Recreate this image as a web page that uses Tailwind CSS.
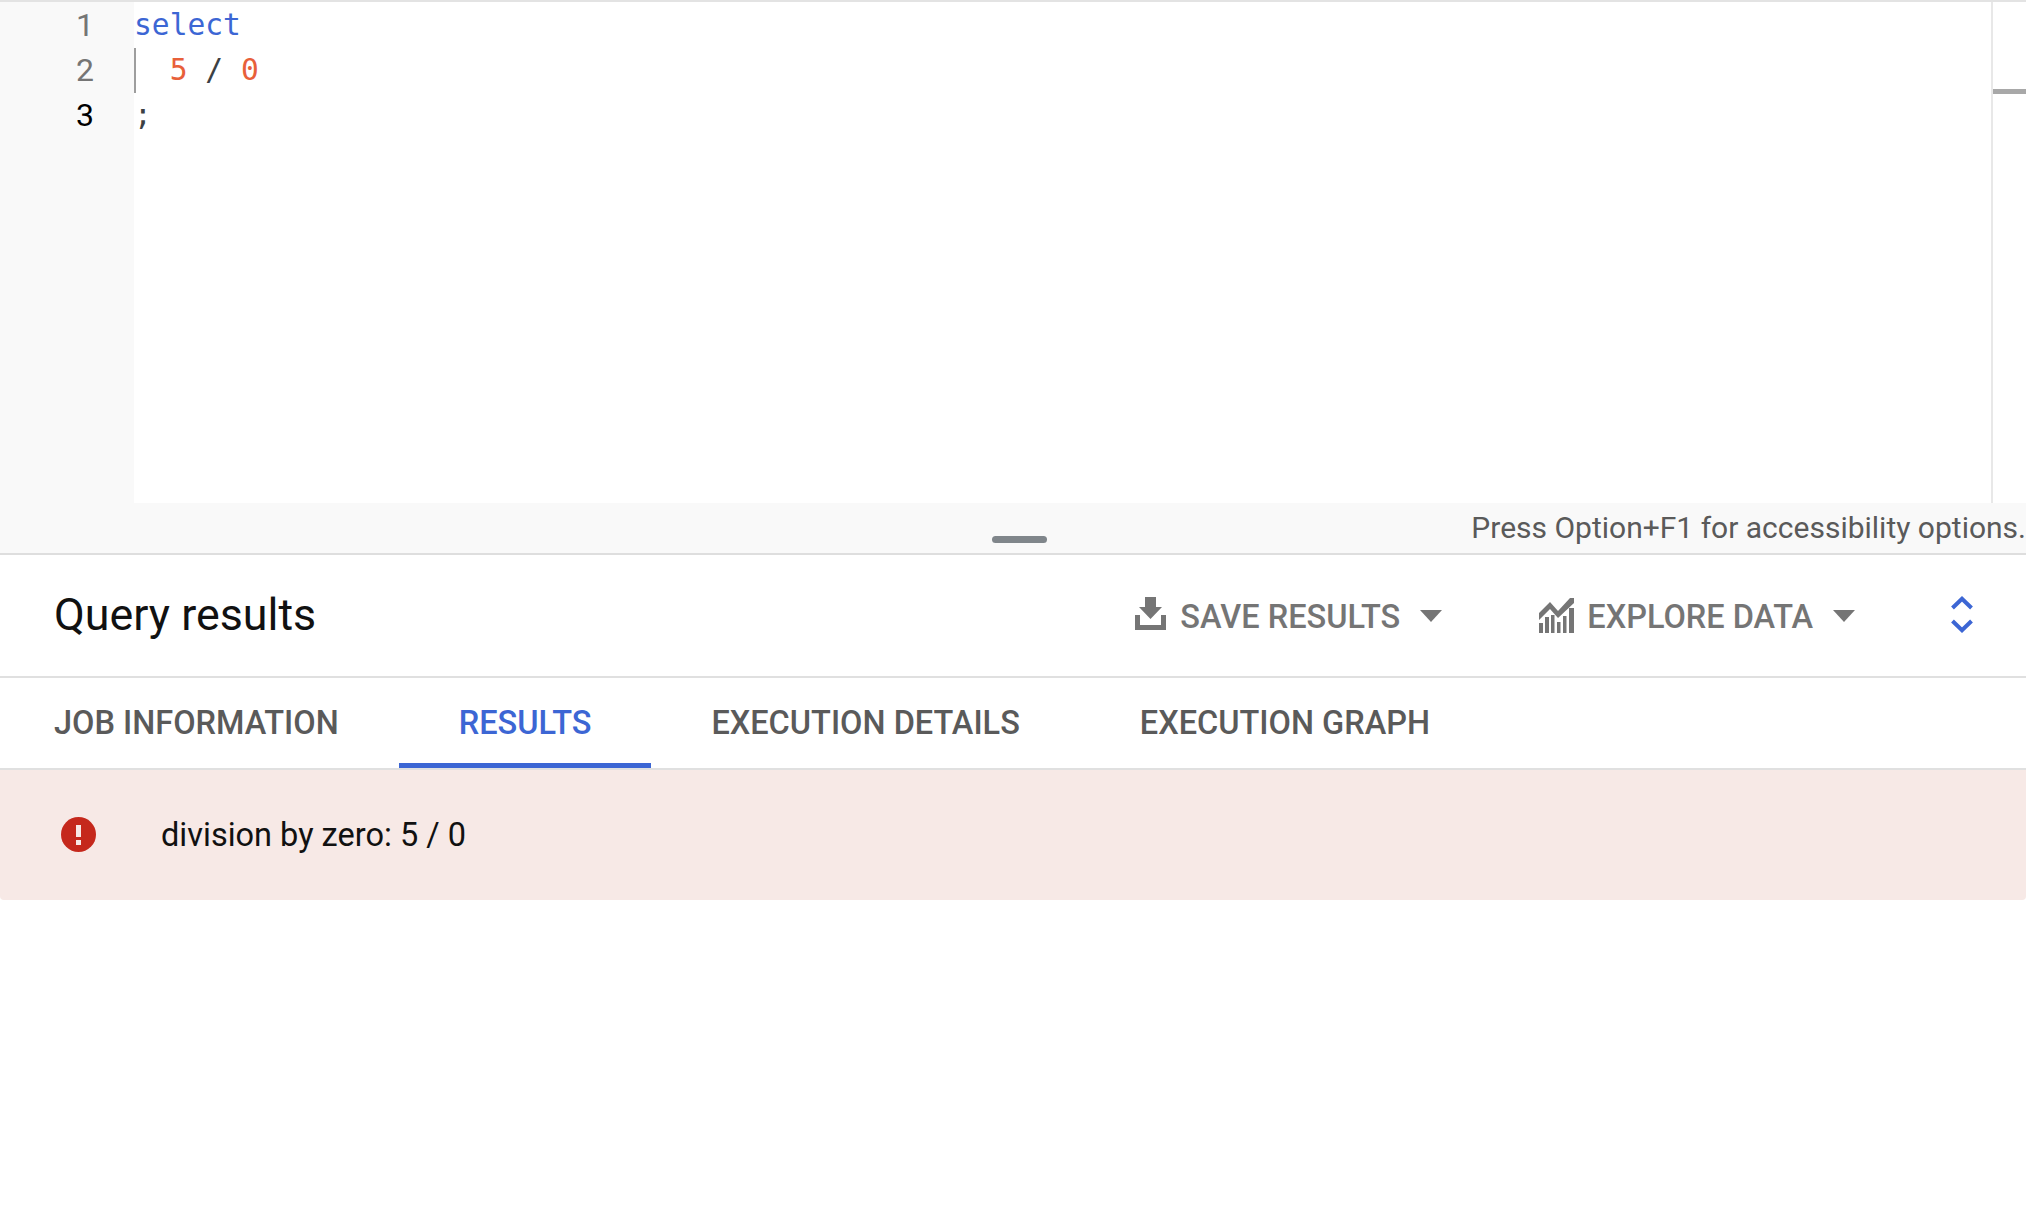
<!DOCTYPE html>
<html>
<head>
  <meta name="viewport" content="width=device-width, initial-scale=1.0" />
  <title>Query results</title>
  <script src="https://cdn.jsdelivr.net/npm/@tailwindcss/browser@4"></script>
</head>
<body class="bg-white font-['Roboto',sans-serif] h-[1220px] overflow-hidden">

  <!-- Editor -->
  <div class="flex h-[503px] border-t-2 border-[#e3e3e3]">
    <div class="w-[134px] shrink-0 bg-[#f9f9f9] pt-[1px] pr-[40px] text-right font-['Roboto'] text-[32px] leading-[45px] text-[#757575]">
      <div>1</div>
      <div>2</div>
      <div class="text-black">3</div>
    </div>
    <div class="relative flex-1 pt-[1px] font-['DejaVu_Sans_Mono',monospace] text-[29.6px] leading-[45px] text-[#3c4043]">
      <div class="text-[#3c66d4] whitespace-pre">select</div>
      <div class="whitespace-pre">  <span class="text-[#e8603a]">5</span> / <span class="text-[#e8603a]">0</span></div>
      <div class="whitespace-pre">;</div>
      <div class="absolute left-0 top-[46px] h-[45px] w-[2px] bg-[#9e9e9e]"></div>
    </div>
    <div class="w-[35px] shrink-0 border-l-2 border-[#e8e8e8]">
      <div class="mt-[87px] h-[5px] bg-[#a8a8a8]"></div>
    </div>
  </div>

  <!-- Status strip -->
  <div class="relative flex h-[52px] justify-end border-b-2 border-[#dedede] bg-[#f9f9f9] pt-[7px] text-[30px] leading-[36px] whitespace-nowrap text-[#5a5a5a]">
    Press Option+F1 for accessibility options.
    <div class="absolute left-[992px] top-[33px] h-[7px] w-[55px] rounded-full bg-[#80868b]"></div>
  </div>

  <!-- Header -->
  <div class="flex h-[123px] items-center border-b-2 border-[#e0e0e0] pl-[54px]">
    <h1 class="text-[44.8px] leading-none text-[#111] flex-1">Query results</h1>
    <div class="flex items-center text-[#757575] text-[32.5px] font-medium">
      <svg class="w-[31px] h-[33px] mr-[14px] mb-[5px]" viewBox="0 0 31 33" fill="#757575"><path d="M10 0h11v10h6L15.5 22 4 10h6z"/><path d="M0 18h5v10h21V18h5v15H0z"/></svg>
      <span class="pt-[4px]">SAVE RESULTS</span>
      <svg class="w-[22px] h-[12px] ml-[20px]" viewBox="0 0 22 12" fill="#757575"><path d="M0 0h22L11 12z"/></svg>
    </div>
    <div class="flex items-center text-[#757575] text-[32.5px] font-medium ml-[97px]">
      <svg class="w-[35px] h-[35px] mr-[13px]" viewBox="0 0 35 35" fill="#757575"><path d="M0 15L11 4l8 9L31 0l4 0v5L19 20 11 11 0 22z"/><path d="M0 25h4v10H0zM6 19h4v16H6zM12 17h3.500v18H12zM18 24h3.500v11H18zM24 18h3.500v17H24zM30 10h5v25h-5z"/></svg>
      <span class="pt-[4px]">EXPLORE DATA</span>
      <svg class="w-[22px] h-[12px] ml-[20px]" viewBox="0 0 22 12" fill="#757575"><path d="M0 0h22L11 12z"/></svg>
    </div>
    <svg class="w-[22px] h-[37px] ml-[96px] mr-[53px] mb-[2px]" viewBox="0 0 22 37" fill="none" stroke="#3c66d4" stroke-width="4"><path d="M1.500 12L11 2.800l9.500 9.200M1.500 25l9.500 9.200 9.500-9.200"/></svg>
  </div>

  <!-- Tabs -->
  <div class="flex h-[92px] border-b-2 border-[#e0e0e0] pl-[54px] text-[32.5px] font-medium text-[#5a5a5a]">
    <div class="flex items-center h-[90px]">JOB INFORMATION</div>
    <div class="ml-[60px] flex items-center h-[90px] px-[60px] pt-[5px] text-[#3c66d4] border-b-[5px] border-[#3c66d4]">RESULTS</div>
    <div class="ml-[60px] flex items-center h-[90px]">EXECUTION DETAILS</div>
    <div class="ml-[120px] flex items-center h-[90px]">EXECUTION GRAPH</div>
  </div>

  <!-- Error -->
  <div class="flex h-[130px] items-center rounded-b-[4px] bg-[#f7e9e6] pl-[61px]">
    <svg class="w-[35px] h-[35px] mr-[65px] mb-[1px]" viewBox="0 0 35 35"><circle cx="17.5" cy="17.5" r="17.5" fill="#c5281c"/><path fill="#f7e9e6" d="M15 8h5v12h-5zM15 23h5v5h-5z"/></svg>
    <span class="text-[32.5px] text-[#111]">division by zero: 5 / 0</span>
  </div>
</body>
</html>
